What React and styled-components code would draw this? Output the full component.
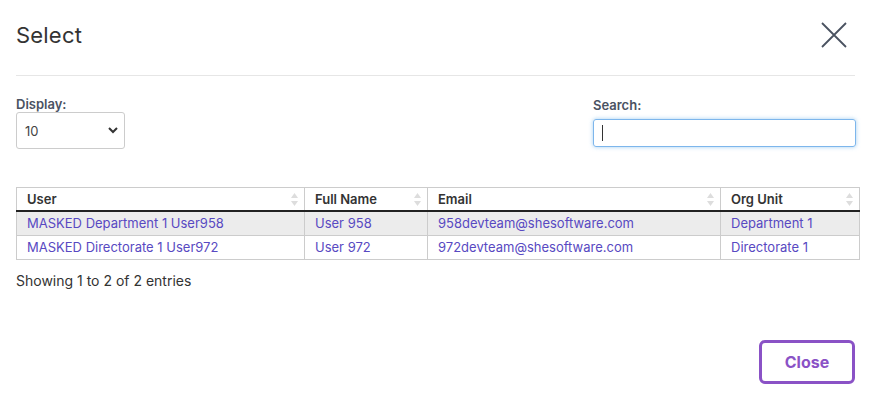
import React from 'react';
import styled, { createGlobalStyle } from 'styled-components';

const GlobalStyle = createGlobalStyle`
  html, body {
    margin: 0;
    padding: 0;
    background: #fff;
  }
  body {
    font-family: Inter, "Liberation Sans", sans-serif;
    color: #333;
  }
`;

const Modal = styled.div`
  width: 871px;
  height: 394px;
  box-sizing: border-box;
  padding: 0 16px;
  display: flex;
  flex-direction: column;
`;

const Header = styled.div`
  display: flex;
  align-items: center;
  justify-content: space-between;
  height: 76px;
  box-sizing: border-box;
  padding-bottom: 6px;
  border-bottom: 1px solid #e6e6e6;
`;

const Title = styled.h2`
  margin: 0;
  font-size: 22px;
  font-weight: 400;
  color: #333;
  letter-spacing: 0.2px;
`;

const CloseIcon = styled.button`
  border: 0;
  background: none;
  padding: 0;
  margin-right: 6px;
  width: 30px;
  height: 30px;
  display: flex;
  align-items: center;
  justify-content: center;
  cursor: pointer;
`;

const Controls = styled.div`
  display: flex;
  justify-content: space-between;
  padding-top: 20px;
`;

const Field = styled.div`
  display: flex;
  flex-direction: column;
  padding-top: ${(p) => p.offset || 0}px;
`;

const Label = styled.label`
  font-size: 13px;
  font-weight: 600;
  line-height: 16px;
  color: #4a5262;
`;

const SelectBox = styled.div`
  width: 109px;
  height: 37px;
  box-sizing: border-box;
  border: 1px solid #ccc;
  border-radius: 3px;
  display: flex;
  align-items: center;
  justify-content: space-between;
  padding: 0 6px 0 8px;
  font-size: 13px;
  color: #444;
`;

const SearchInput = styled.div`
  width: 263px;
  height: 28px;
  box-sizing: border-box;
  margin-top: 6px;
  border: 1px solid #7db6ec;
  border-radius: 3px;
  box-shadow: 0 0 4px rgba(102, 175, 233, 0.6);
  display: flex;
  align-items: center;
  padding-left: 8px;
  margin-right: -1px;
`;

const Caret = styled.span`
  width: 1px;
  height: 16px;
  background: #333;
`;

const Table = styled.table`
  margin-top: 38px;
  width: 843px;
  table-layout: fixed;
  border-collapse: collapse;
  font-size: 13px;
  border: 1px solid #ccc;
`;

const Th = styled.th`
  text-align: left;
  font-weight: 600;
  color: #333;
  height: 22px;
  line-height: 22px;
  padding: 0 10px;
  border-left: 1px solid #ccc;
  border-bottom: 2px solid #222;
  position: relative;
`;

const SortIcon = styled.svg`
  position: absolute;
  right: 6px;
  top: 5px;
`;

const Tr = styled.tr`
  background: ${(p) => (p.shaded ? '#ececec' : '#fff')};
`;

const Td = styled.td`
  height: 23px;
  line-height: 23px;
  padding: 0 10px;
  border-left: 1px solid #ccc;
  border-top: 1px solid #ccc;
  color: #5849c2;
  white-space: nowrap;
`;

const Info = styled.div`
  margin-top: 12px;
  font-size: 14px;
  color: #333;
`;

const Footer = styled.div`
  margin-top: auto;
  padding-bottom: 10px;
  display: flex;
  justify-content: flex-end;
`;

const CloseButton = styled.button`
  width: 96px;
  height: 44px;
  border: 3px solid #8a52c6;
  border-radius: 6px;
  background: #fff;
  color: #8a52c6;
  font-family: inherit;
  font-size: 16px;
  font-weight: 700;
  cursor: pointer;
`;

const rows = [
  ['MASKED Department 1 User958', 'User 958', '958devteam@shesoftware.com', 'Department 1'],
  ['MASKED Directorate 1 User972', 'User 972', '972devteam@shesoftware.com', 'Directorate 1'],
];

const columns = [
  { name: 'User', w: 288 },
  { name: 'Full Name', w: 123 },
  { name: 'Email', w: 293 },
  { name: 'Org Unit', w: 139 },
];

const Sort = () => (
  <SortIcon width="7" height="13" viewBox="0 0 7 13">
    <path d="M3.5 0 L7 5 L0 5 Z" fill="#ddd" />
    <path d="M3.5 13 L7 8 L0 8 Z" fill="#ddd" />
  </SortIcon>
);

const App = () => (
  <Modal>
    <GlobalStyle />
    <Header>
      <Title>Select</Title>
      <CloseIcon aria-label="close">
        <svg width="26" height="26" viewBox="0 0 26 26">
          <path d="M1 1 L25 25 M25 1 L1 25" stroke="#4a5260" strokeWidth="1.8" />
        </svg>
      </CloseIcon>
    </Header>
    <Controls>
      <Field>
        <Label>Display:</Label>
        <SelectBox>
          <span>10</span>
          <svg width="10" height="7" viewBox="0 0 10 7">
            <path d="M1 1 L5 5 L9 1" stroke="#333" strokeWidth="2" fill="none" />
          </svg>
        </SelectBox>
      </Field>
      <Field offset={1}>
        <Label>Search:</Label>
        <SearchInput>
          <Caret />
        </SearchInput>
      </Field>
    </Controls>
    <Table>
      <colgroup>
        {columns.map((c) => (
          <col key={c.name} style={{ width: c.w }} />
        ))}
      </colgroup>
      <thead>
        <tr>
          {columns.map((c) => (
            <Th key={c.name}>
              {c.name}
              <Sort />
            </Th>
          ))}
        </tr>
      </thead>
      <tbody>
        {rows.map((r, i) => (
          <Tr key={i} shaded={i === 0}>
            {r.map((cell, j) => (
              <Td key={j}>{cell}</Td>
            ))}
          </Tr>
        ))}
      </tbody>
    </Table>
    <Info>Showing 1 to 2 of 2 entries</Info>
    <Footer>
      <CloseButton>Close</CloseButton>
    </Footer>
  </Modal>
);

export default App;
